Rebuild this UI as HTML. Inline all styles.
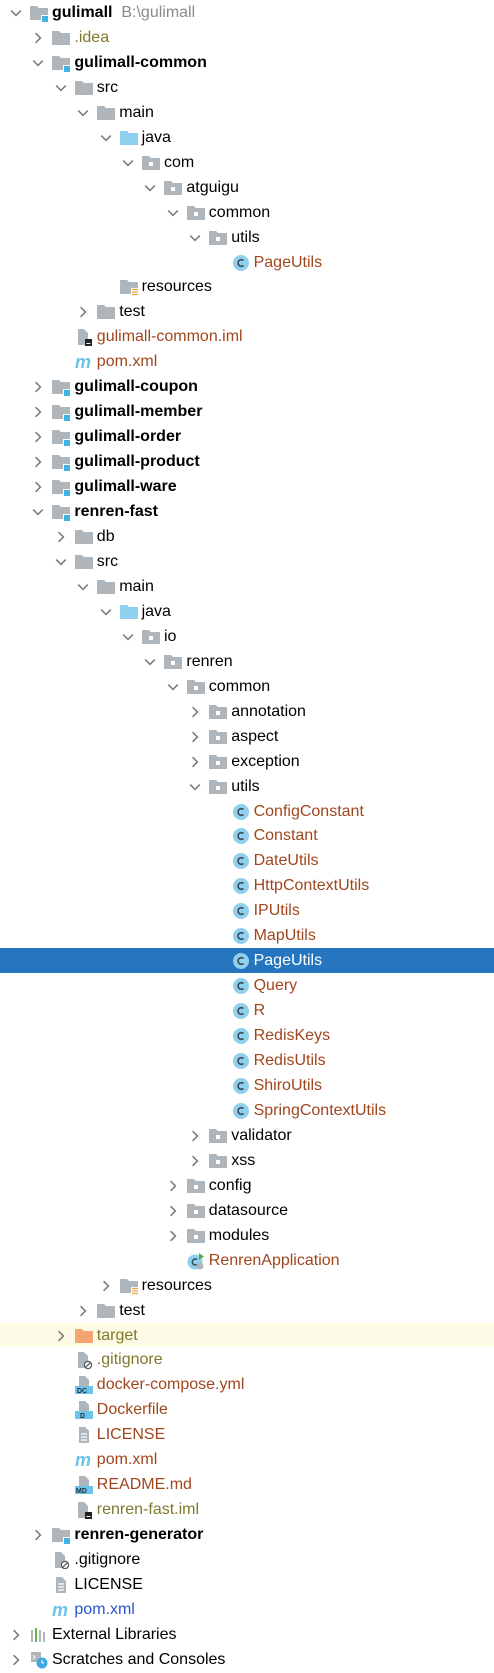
<!DOCTYPE html>
<html><head><meta charset="utf-8"><style>
body{margin:0;width:494px;height:1673px;background:#fff;overflow:hidden;font-family:"Liberation Sans","Noto Sans CJK SC",sans-serif;font-size:16px;color:#000}
#t{position:relative;top:0px}
.r{position:relative;height:24.96px;}
.r span.x{position:absolute;top:4px;left:calc(52px + var(--l)*22.4px);white-space:nowrap;line-height:18px}
.r svg{position:absolute}
.c{left:calc(10px + var(--l)*22.4px);top:7px}
.i{left:calc(30px + var(--l)*22.4px);top:4px}
.b{font-weight:bold}
.n{color:#a0461e}.o{color:#80782a}.u{color:#2755c8}.g{color:#8a8a8a;font-weight:normal}
.sel{background:#2675bf}.sel span.x{color:#fff}
.yl{background:#fdfbe5}
</style></head><body><div id="t">
<svg width="0" height="0" style="position:absolute">
<defs>
<symbol id="cd" viewBox="0 0 10 10"><path d="M1 3l4 4 4-4" fill="none" stroke="#7a7a7a" stroke-width="1.3"/></symbol>
<symbol id="cr" viewBox="0 0 10 10"><path d="M3 1l4 4-4 4" fill="none" stroke="#7a7a7a" stroke-width="1.3"/></symbol>
<symbol id="f" viewBox="0 0 18 18"><path d="M0 2h7l2 2h9v12H0z" fill="#aeb6bc"/></symbol>
<symbol id="fo" viewBox="0 0 18 18"><path d="M0 2h7l2 2h9v12H0z" fill="#f4a372"/></symbol>
<symbol id="fj" viewBox="0 0 18 18"><path d="M0 2h7l2 2h9v12H0z" fill="#8fd0ee"/></symbol>
<symbol id="fp" viewBox="0 0 18 18"><path d="M0 2h7l2 2h9v12H0z" fill="#aeb6bc"/><rect x="7" y="8" width="4" height="4" fill="#fff"/></symbol>
<symbol id="fm" viewBox="0 0 18 18"><path d="M0 2h7l2 2h9v12H0z" fill="#aeb6bc"/><rect x="11" y="11" width="7" height="7" fill="#fff"/><rect x="12" y="12" width="6" height="6" fill="#3fb4e3"/></symbol>
<symbol id="fr" viewBox="0 0 18 18"><path d="M0 2h7l2 2h9v12H0z" fill="#aeb6bc"/><rect x="11" y="10" width="7" height="8" fill="#fff"/><path d="M12 11.5h6M12 14h6M12 16.5h6" stroke="#e8a640" stroke-width="1.2"/></symbol>
<symbol id="cl" viewBox="0 0 18 18"><circle cx="9" cy="9" r="8" fill="#8fd0ee"/><path d="M11.5 6.5a3.3 3.3 0 1 0 0 5" fill="none" stroke="#3a4a55" stroke-width="1.6"/></symbol>
<symbol id="m" viewBox="0 0 18 18"><text x="0" y="15" font-family="Liberation Sans" font-style="italic" font-weight="bold" font-size="18" fill="#6ec3ea">m</text></symbol>
<symbol id="fi" viewBox="0 0 18 18"><path d="M3 1h6l4 4v12H3z" fill="#aeb6bc"/><rect x="10" y="11" width="7" height="7" fill="#222"/><rect x="11.5" y="15" width="4" height="1" fill="#fff"/></symbol>
<symbol id="fg" viewBox="0 0 18 18"><path d="M3 1h6l4 4v12H3z" fill="#aeb6bc"/><circle cx="13" cy="14" r="3.6" fill="#fff" stroke="#555" stroke-width="1.2"/><path d="M10.8 16.2l4.4-4.4" stroke="#555" stroke-width="1.2"/></symbol>
<symbol id="ft" viewBox="0 0 18 18"><path d="M4 1h6l4 4v12H4z" fill="#aeb6bc"/><path d="M6 8h6M6 11h6M6 14h6" stroke="#fff" stroke-width="1.2"/></symbol>
<symbol id="dc" viewBox="0 0 18 18"><path d="M4 0h6l4 4v7H4z" fill="#aeb6bc"/><rect x="0" y="10" width="18" height="8" fill="#6ec3ea"/><text x="2" y="17" font-size="7" font-weight="bold" font-family="Liberation Sans" fill="#234">DC</text></symbol>
<symbol id="dd" viewBox="0 0 18 18"><path d="M4 0h6l4 4v7H4z" fill="#aeb6bc"/><rect x="0" y="10" width="18" height="8" fill="#6ec3ea"/><text x="5" y="17" font-size="7" font-weight="bold" font-family="Liberation Sans" fill="#234">D</text></symbol>
<symbol id="md" viewBox="0 0 18 18"><path d="M4 0h6l4 4v7H4z" fill="#aeb6bc"/><rect x="0" y="10" width="18" height="8" fill="#6ec3ea"/><text x="1" y="17" font-size="7" font-weight="bold" font-family="Liberation Sans" fill="#234">MD</text></symbol>
<symbol id="ra" viewBox="0 0 18 18"><circle cx="8" cy="10" r="7.5" fill="#8fd0ee"/><path d="M10 7.5a3 3 0 1 0 0 5" fill="none" stroke="#3a4a55" stroke-width="1.5"/><path d="M12 1v7l5-3.5z" fill="#4caf50"/><circle cx="13" cy="14" r="3.5" fill="#aeb6bc"/></symbol>
<symbol id="el" viewBox="0 0 18 18"><rect x="1" y="4" width="2" height="12" fill="#aeb6bc"/><rect x="5" y="2" width="2" height="14" fill="#62b543"/><rect x="9" y="4" width="2" height="12" fill="#aeb6bc"/><rect x="13" y="6" width="2" height="10" fill="#aeb6bc"/></symbol>
<symbol id="sc" viewBox="0 0 18 18"><path d="M1 1h10v10H1z" fill="#aeb6bc"/><path d="M3 4l2 2-2 2" stroke="#fff" fill="none"/><circle cx="12" cy="12" r="5.5" fill="#40a8e0"/><path d="M12 9v3h2" stroke="#fff" fill="none"/></symbol>
</defs></svg>
<div class="r" style="--l:0"><svg class="c" width="12" height="12"><use href="#cd"/></svg><svg class="i" width="18" height="18"><use href="#fm"/></svg><span class="x b">gulimall <span class="g">&nbsp;B:\gulimall</span></span></div>
<div class="r" style="--l:1"><svg class="c" width="12" height="12"><use href="#cr"/></svg><svg class="i" width="18" height="18"><use href="#f"/></svg><span class="x o">.idea</span></div>
<div class="r" style="--l:1"><svg class="c" width="12" height="12"><use href="#cd"/></svg><svg class="i" width="18" height="18"><use href="#fm"/></svg><span class="x b">gulimall-common</span></div>
<div class="r" style="--l:2"><svg class="c" width="12" height="12"><use href="#cd"/></svg><svg class="i" width="18" height="18"><use href="#f"/></svg><span class="x">src</span></div>
<div class="r" style="--l:3"><svg class="c" width="12" height="12"><use href="#cd"/></svg><svg class="i" width="18" height="18"><use href="#f"/></svg><span class="x">main</span></div>
<div class="r" style="--l:4"><svg class="c" width="12" height="12"><use href="#cd"/></svg><svg class="i" width="18" height="18"><use href="#fj"/></svg><span class="x">java</span></div>
<div class="r" style="--l:5"><svg class="c" width="12" height="12"><use href="#cd"/></svg><svg class="i" width="18" height="18"><use href="#fp"/></svg><span class="x">com</span></div>
<div class="r" style="--l:6"><svg class="c" width="12" height="12"><use href="#cd"/></svg><svg class="i" width="18" height="18"><use href="#fp"/></svg><span class="x">atguigu</span></div>
<div class="r" style="--l:7"><svg class="c" width="12" height="12"><use href="#cd"/></svg><svg class="i" width="18" height="18"><use href="#fp"/></svg><span class="x">common</span></div>
<div class="r" style="--l:8"><svg class="c" width="12" height="12"><use href="#cd"/></svg><svg class="i" width="18" height="18"><use href="#fp"/></svg><span class="x">utils</span></div>
<div class="r" style="--l:9"><svg class="i" width="18" height="18"><use href="#cl"/></svg><span class="x n">PageUtils</span></div>
<div class="r" style="--l:4"><svg class="i" width="18" height="18"><use href="#fr"/></svg><span class="x">resources</span></div>
<div class="r" style="--l:3"><svg class="c" width="12" height="12"><use href="#cr"/></svg><svg class="i" width="18" height="18"><use href="#f"/></svg><span class="x">test</span></div>
<div class="r" style="--l:2"><svg class="i" width="18" height="18"><use href="#fi"/></svg><span class="x n">gulimall-common.iml</span></div>
<div class="r" style="--l:2"><svg class="i" width="18" height="18"><use href="#m"/></svg><span class="x n">pom.xml</span></div>
<div class="r" style="--l:1"><svg class="c" width="12" height="12"><use href="#cr"/></svg><svg class="i" width="18" height="18"><use href="#fm"/></svg><span class="x b">gulimall-coupon</span></div>
<div class="r" style="--l:1"><svg class="c" width="12" height="12"><use href="#cr"/></svg><svg class="i" width="18" height="18"><use href="#fm"/></svg><span class="x b">gulimall-member</span></div>
<div class="r" style="--l:1"><svg class="c" width="12" height="12"><use href="#cr"/></svg><svg class="i" width="18" height="18"><use href="#fm"/></svg><span class="x b">gulimall-order</span></div>
<div class="r" style="--l:1"><svg class="c" width="12" height="12"><use href="#cr"/></svg><svg class="i" width="18" height="18"><use href="#fm"/></svg><span class="x b">gulimall-product</span></div>
<div class="r" style="--l:1"><svg class="c" width="12" height="12"><use href="#cr"/></svg><svg class="i" width="18" height="18"><use href="#fm"/></svg><span class="x b">gulimall-ware</span></div>
<div class="r" style="--l:1"><svg class="c" width="12" height="12"><use href="#cd"/></svg><svg class="i" width="18" height="18"><use href="#fm"/></svg><span class="x b">renren-fast</span></div>
<div class="r" style="--l:2"><svg class="c" width="12" height="12"><use href="#cr"/></svg><svg class="i" width="18" height="18"><use href="#f"/></svg><span class="x">db</span></div>
<div class="r" style="--l:2"><svg class="c" width="12" height="12"><use href="#cd"/></svg><svg class="i" width="18" height="18"><use href="#f"/></svg><span class="x">src</span></div>
<div class="r" style="--l:3"><svg class="c" width="12" height="12"><use href="#cd"/></svg><svg class="i" width="18" height="18"><use href="#f"/></svg><span class="x">main</span></div>
<div class="r" style="--l:4"><svg class="c" width="12" height="12"><use href="#cd"/></svg><svg class="i" width="18" height="18"><use href="#fj"/></svg><span class="x">java</span></div>
<div class="r" style="--l:5"><svg class="c" width="12" height="12"><use href="#cd"/></svg><svg class="i" width="18" height="18"><use href="#fp"/></svg><span class="x">io</span></div>
<div class="r" style="--l:6"><svg class="c" width="12" height="12"><use href="#cd"/></svg><svg class="i" width="18" height="18"><use href="#fp"/></svg><span class="x">renren</span></div>
<div class="r" style="--l:7"><svg class="c" width="12" height="12"><use href="#cd"/></svg><svg class="i" width="18" height="18"><use href="#fp"/></svg><span class="x">common</span></div>
<div class="r" style="--l:8"><svg class="c" width="12" height="12"><use href="#cr"/></svg><svg class="i" width="18" height="18"><use href="#fp"/></svg><span class="x">annotation</span></div>
<div class="r" style="--l:8"><svg class="c" width="12" height="12"><use href="#cr"/></svg><svg class="i" width="18" height="18"><use href="#fp"/></svg><span class="x">aspect</span></div>
<div class="r" style="--l:8"><svg class="c" width="12" height="12"><use href="#cr"/></svg><svg class="i" width="18" height="18"><use href="#fp"/></svg><span class="x">exception</span></div>
<div class="r" style="--l:8"><svg class="c" width="12" height="12"><use href="#cd"/></svg><svg class="i" width="18" height="18"><use href="#fp"/></svg><span class="x">utils</span></div>
<div class="r" style="--l:9"><svg class="i" width="18" height="18"><use href="#cl"/></svg><span class="x n">ConfigConstant</span></div>
<div class="r" style="--l:9"><svg class="i" width="18" height="18"><use href="#cl"/></svg><span class="x n">Constant</span></div>
<div class="r" style="--l:9"><svg class="i" width="18" height="18"><use href="#cl"/></svg><span class="x n">DateUtils</span></div>
<div class="r" style="--l:9"><svg class="i" width="18" height="18"><use href="#cl"/></svg><span class="x n">HttpContextUtils</span></div>
<div class="r" style="--l:9"><svg class="i" width="18" height="18"><use href="#cl"/></svg><span class="x n">IPUtils</span></div>
<div class="r" style="--l:9"><svg class="i" width="18" height="18"><use href="#cl"/></svg><span class="x n">MapUtils</span></div>
<div class="r sel" style="--l:9"><svg class="i" width="18" height="18"><use href="#cl"/></svg><span class="x">PageUtils</span></div>
<div class="r" style="--l:9"><svg class="i" width="18" height="18"><use href="#cl"/></svg><span class="x n">Query</span></div>
<div class="r" style="--l:9"><svg class="i" width="18" height="18"><use href="#cl"/></svg><span class="x n">R</span></div>
<div class="r" style="--l:9"><svg class="i" width="18" height="18"><use href="#cl"/></svg><span class="x n">RedisKeys</span></div>
<div class="r" style="--l:9"><svg class="i" width="18" height="18"><use href="#cl"/></svg><span class="x n">RedisUtils</span></div>
<div class="r" style="--l:9"><svg class="i" width="18" height="18"><use href="#cl"/></svg><span class="x n">ShiroUtils</span></div>
<div class="r" style="--l:9"><svg class="i" width="18" height="18"><use href="#cl"/></svg><span class="x n">SpringContextUtils</span></div>
<div class="r" style="--l:8"><svg class="c" width="12" height="12"><use href="#cr"/></svg><svg class="i" width="18" height="18"><use href="#fp"/></svg><span class="x">validator</span></div>
<div class="r" style="--l:8"><svg class="c" width="12" height="12"><use href="#cr"/></svg><svg class="i" width="18" height="18"><use href="#fp"/></svg><span class="x">xss</span></div>
<div class="r" style="--l:7"><svg class="c" width="12" height="12"><use href="#cr"/></svg><svg class="i" width="18" height="18"><use href="#fp"/></svg><span class="x">config</span></div>
<div class="r" style="--l:7"><svg class="c" width="12" height="12"><use href="#cr"/></svg><svg class="i" width="18" height="18"><use href="#fp"/></svg><span class="x">datasource</span></div>
<div class="r" style="--l:7"><svg class="c" width="12" height="12"><use href="#cr"/></svg><svg class="i" width="18" height="18"><use href="#fp"/></svg><span class="x">modules</span></div>
<div class="r" style="--l:7"><svg class="i" width="18" height="18"><use href="#ra"/></svg><span class="x n">RenrenApplication</span></div>
<div class="r" style="--l:4"><svg class="c" width="12" height="12"><use href="#cr"/></svg><svg class="i" width="18" height="18"><use href="#fr"/></svg><span class="x">resources</span></div>
<div class="r" style="--l:3"><svg class="c" width="12" height="12"><use href="#cr"/></svg><svg class="i" width="18" height="18"><use href="#f"/></svg><span class="x">test</span></div>
<div class="r yl" style="--l:2"><svg class="c" width="12" height="12"><use href="#cr"/></svg><svg class="i" width="18" height="18"><use href="#fo"/></svg><span class="x o">target</span></div>
<div class="r" style="--l:2"><svg class="i" width="18" height="18"><use href="#fg"/></svg><span class="x o">.gitignore</span></div>
<div class="r" style="--l:2"><svg class="i" width="18" height="18"><use href="#dc"/></svg><span class="x n">docker-compose.yml</span></div>
<div class="r" style="--l:2"><svg class="i" width="18" height="18"><use href="#dd"/></svg><span class="x n">Dockerfile</span></div>
<div class="r" style="--l:2"><svg class="i" width="18" height="18"><use href="#ft"/></svg><span class="x n">LICENSE</span></div>
<div class="r" style="--l:2"><svg class="i" width="18" height="18"><use href="#m"/></svg><span class="x n">pom.xml</span></div>
<div class="r" style="--l:2"><svg class="i" width="18" height="18"><use href="#md"/></svg><span class="x n">README.md</span></div>
<div class="r" style="--l:2"><svg class="i" width="18" height="18"><use href="#fi"/></svg><span class="x o">renren-fast.iml</span></div>
<div class="r" style="--l:1"><svg class="c" width="12" height="12"><use href="#cr"/></svg><svg class="i" width="18" height="18"><use href="#fm"/></svg><span class="x b">renren-generator</span></div>
<div class="r" style="--l:1"><svg class="i" width="18" height="18"><use href="#fg"/></svg><span class="x">.gitignore</span></div>
<div class="r" style="--l:1"><svg class="i" width="18" height="18"><use href="#ft"/></svg><span class="x">LICENSE</span></div>
<div class="r" style="--l:1"><svg class="i" width="18" height="18"><use href="#m"/></svg><span class="x u">pom.xml</span></div>
<div class="r" style="--l:0"><svg class="c" width="12" height="12"><use href="#cr"/></svg><svg class="i" width="18" height="18"><use href="#el"/></svg><span class="x">External Libraries</span></div>
<div class="r" style="--l:0"><svg class="c" width="12" height="12"><use href="#cr"/></svg><svg class="i" width="18" height="18"><use href="#sc"/></svg><span class="x">Scratches and Consoles</span></div>
</div></body></html>
